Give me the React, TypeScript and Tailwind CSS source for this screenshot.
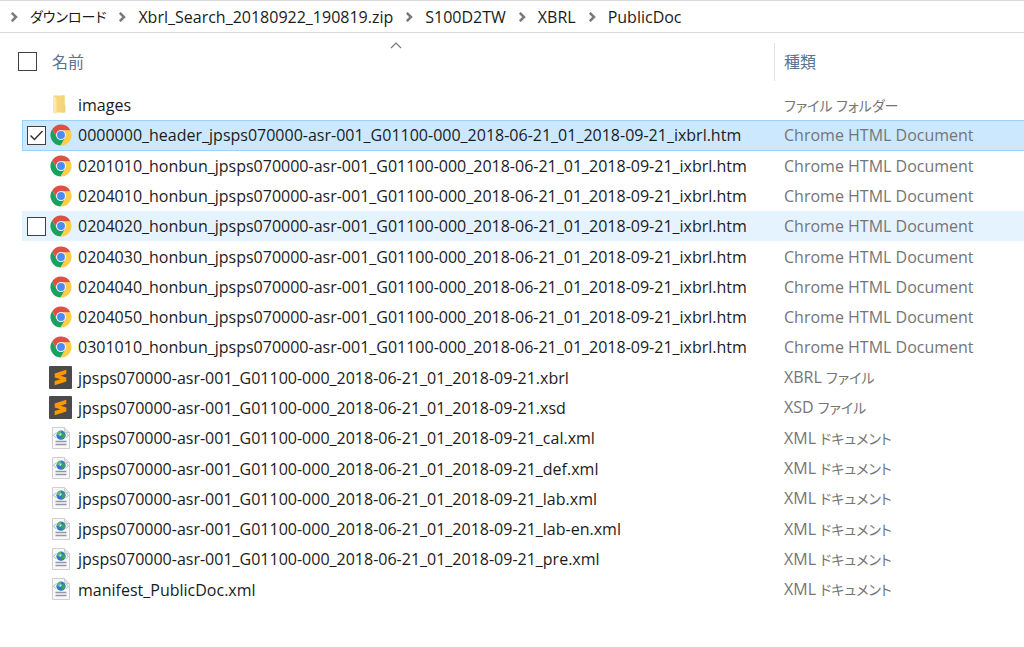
import { useState } from "react";
import clsx from "clsx";

type FileKind = "folder" | "chrome" | "sublime" | "xml";

interface FileEntry {
  name: string;
  kind: FileKind;
  type: string;
  typeJa?: string;
}

const CHROME_TYPE = "Chrome HTML Document";

const PATH = ["ダウンロード", "Xbrl_Search_20180922_190819.zip", "S100D2TW", "XBRL", "PublicDoc"];

const FILES: FileEntry[] = [
  { name: "images", kind: "folder", type: "", typeJa: "ファイル フォルダー" },
  { name: "0000000_header_jpsps070000-asr-001_G01100-000_2018-06-21_01_2018-09-21_ixbrl.htm", kind: "chrome", type: CHROME_TYPE },
  { name: "0201010_honbun_jpsps070000-asr-001_G01100-000_2018-06-21_01_2018-09-21_ixbrl.htm", kind: "chrome", type: CHROME_TYPE },
  { name: "0204010_honbun_jpsps070000-asr-001_G01100-000_2018-06-21_01_2018-09-21_ixbrl.htm", kind: "chrome", type: CHROME_TYPE },
  { name: "0204020_honbun_jpsps070000-asr-001_G01100-000_2018-06-21_01_2018-09-21_ixbrl.htm", kind: "chrome", type: CHROME_TYPE },
  { name: "0204030_honbun_jpsps070000-asr-001_G01100-000_2018-06-21_01_2018-09-21_ixbrl.htm", kind: "chrome", type: CHROME_TYPE },
  { name: "0204040_honbun_jpsps070000-asr-001_G01100-000_2018-06-21_01_2018-09-21_ixbrl.htm", kind: "chrome", type: CHROME_TYPE },
  { name: "0204050_honbun_jpsps070000-asr-001_G01100-000_2018-06-21_01_2018-09-21_ixbrl.htm", kind: "chrome", type: CHROME_TYPE },
  { name: "0301010_honbun_jpsps070000-asr-001_G01100-000_2018-06-21_01_2018-09-21_ixbrl.htm", kind: "chrome", type: CHROME_TYPE },
  { name: "jpsps070000-asr-001_G01100-000_2018-06-21_01_2018-09-21.xbrl", kind: "sublime", type: "XBRL ", typeJa: "ファイル" },
  { name: "jpsps070000-asr-001_G01100-000_2018-06-21_01_2018-09-21.xsd", kind: "sublime", type: "XSD ", typeJa: "ファイル" },
  { name: "jpsps070000-asr-001_G01100-000_2018-06-21_01_2018-09-21_cal.xml", kind: "xml", type: "XML ", typeJa: "ドキュメント" },
  { name: "jpsps070000-asr-001_G01100-000_2018-06-21_01_2018-09-21_def.xml", kind: "xml", type: "XML ", typeJa: "ドキュメント" },
  { name: "jpsps070000-asr-001_G01100-000_2018-06-21_01_2018-09-21_lab.xml", kind: "xml", type: "XML ", typeJa: "ドキュメント" },
  { name: "jpsps070000-asr-001_G01100-000_2018-06-21_01_2018-09-21_lab-en.xml", kind: "xml", type: "XML ", typeJa: "ドキュメント" },
  { name: "jpsps070000-asr-001_G01100-000_2018-06-21_01_2018-09-21_pre.xml", kind: "xml", type: "XML ", typeJa: "ドキュメント" },
  { name: "manifest_PublicDoc.xml", kind: "xml", type: "XML ", typeJa: "ドキュメント" },
];

function Chevron() {
  return (
    <svg width="8" height="10" viewBox="0 0 8 10" className="shrink-0" aria-hidden="true">
      <path d="M1.8 0.8 L6 5 L1.8 9.2" fill="none" stroke="#7a7a7a" strokeWidth="2.5" />
    </svg>
  );
}

function FolderIcon() {
  return (
    <svg width="22" height="22" viewBox="0 0 22 22" aria-hidden="true">
      <path d="M3 1.5 H14.5 V18.5 H3 Z" fill="#f5d67b" />
      <path d="M11.5 1.5 H14.5 V10.5 L15.5 11.5 V18.5 H11.5 Z" fill="#f2d47e" />
      <path d="M3 1.5 L6.5 4 V20.5 L3 18.5 Z" fill="#fbe8ae" />
    </svg>
  );
}

function ChromeIcon() {
  return (
    <svg width="22" height="22" viewBox="1 1 46 46" aria-hidden="true">
      <path d="M24 14 H43.6 A22 22 0 0 1 22.86 46 L32.66 29 A10 10 0 0 0 24 14 Z" fill="#ffcd46" />
      <path d="M5.54 12 A22 22 0 0 0 22.86 46 L32.66 29 A10 10 0 0 1 15.34 29 Z" fill="#1aa15f" />
      <path d="M24 14 H43.6 A22 22 0 0 0 5.54 12 L15.34 29 A10 10 0 0 1 24 14 Z" fill="#dd5144" />
      <circle cx="24" cy="24" r="10" fill="#f4f4f4" />
      <circle cx="24" cy="24" r="8.2" fill="#4c8bf5" />
    </svg>
  );
}

function SublimeIcon() {
  return (
    <svg width="23" height="23" viewBox="0 0 23 23" aria-hidden="true">
      <rect width="23" height="23" rx="1" fill="#4a4a4a" />
      <path
        d="M17.3 3.8 V7.8 L11.6 9.7 L17.3 11.4 V15.4 L5.7 19.2 V15.1 L11.5 13.2 L5.7 11.6 V7.4 Z"
        fill="#ff9800"
      />
    </svg>
  );
}

function XmlIcon() {
  return (
    <svg width="22" height="23" viewBox="0 0 22 23" aria-hidden="true">
      <path d="M2.5 0.5 H14.5 L19.5 5.5 V21.5 H2.5 Z" fill="#f8f8f9" stroke="#cfcfd1" />
      <path d="M14.5 0.5 V5.5 H19.5" fill="#e4e4e6" stroke="#cfcfd1" />
      <path d="M6.2 5.5 L3.5 8.2 L6.2 10.9 M15.8 5.5 L18.5 8.2 L15.8 10.9" fill="none" stroke="#a9b4bf" />
      <circle cx="11" cy="8.2" r="4.6" fill="#2c78c8" />
      <path d="M7.5 5.5 Q9.5 3.5 11.5 4.4 L10.5 6.5 L9 8.2 L7 8 Z" fill="#62bb6c" />
      <path d="M12.5 6 L15.2 7 V9.8 L12.8 12 L11.3 9.4 Z" fill="#3ea352" />
      <path d="M9.8 6.6 L12 6.4 L11 8.6 L9.4 9 Z" fill="#c5eef9" />
      <path d="M5.5 14.5 H16.5 M5.5 17.5 H16.5" stroke="#9496a8" strokeWidth="1.4" />
    </svg>
  );
}

function FileIcon({ kind }: { kind: FileKind }) {
  if (kind === "folder") return <FolderIcon />;
  if (kind === "chrome") return <ChromeIcon />;
  if (kind === "sublime") return <SublimeIcon />;
  return <XmlIcon />;
}

interface CheckboxProps {
  label: string;
  checked: boolean;
  onChange: () => void;
  className?: string;
}

function Checkbox({ label, checked, onChange, className }: CheckboxProps) {
  return (
    <span className={clsx("relative block size-[19px] shrink-0", className)}>
      <input
        type="checkbox"
        aria-label={label}
        checked={checked}
        onChange={onChange}
        className="block size-full appearance-none border border-[#404040] bg-white"
      />
      {checked && (
        <svg viewBox="0 0 19 19" className="pointer-events-none absolute inset-0 size-full" aria-hidden="true">
          <path d="M3.5 9.5 L7.5 13.5 L15.5 5" fill="none" stroke="#333" strokeWidth="1.5" />
        </svg>
      )}
    </span>
  );
}

export default function App() {
  const [selected, setSelected] = useState<number[]>([1]);
  const [hovered, setHovered] = useState(4);

  const toggle = (i: number) =>
    setSelected((prev) => (prev.includes(i) ? prev.filter((n) => n !== i) : [...prev, i]));
  const allSelected = selected.length === FILES.length;
  const toggleAll = () => setSelected(allSelected ? [] : FILES.map((_, i) => i));

  return (
    <div className="min-h-screen overflow-hidden bg-white font-['Open_Sans','Noto_Sans_CJK_JP',sans-serif] text-[16px] leading-6 text-[#1b1b1b]">
      {/* Address bar */}
      <nav aria-label="パス" className="border-y border-[#d9d9d9]">
        <ol className="flex h-[31px] items-center gap-3 pl-[10px] whitespace-nowrap">
          {PATH.map((part) => (
            <li key={part} className="flex items-center gap-3">
              <Chevron />
              <a href="#" className={clsx(part === "ダウンロード" && "text-[14px] [font-feature-settings:'palt']")}>
                {part}
              </a>
            </li>
          ))}
        </ol>
      </nav>

      {/* File list */}
      <table className="h-[572px] w-full table-fixed border-separate border-spacing-0 text-left">
        <colgroup>
          <col className="w-[22px]" />
          <col className="w-[752px]" />
          <col />
        </colgroup>
        <thead>
          <tr className="h-[57px] text-[#5a7391]">
            <th colSpan={2} scope="col" className="relative p-0 font-normal">
              <div className="flex items-center gap-[15px] pl-[18px]">
                <Checkbox label="すべて選択" checked={allSelected} onChange={toggleAll} />
                <button type="button">名前</button>
              </div>
              <svg
                width="12"
                height="7"
                viewBox="0 0 12 7"
                className="absolute top-[9px] left-[390px]"
                aria-hidden="true"
              >
                <path d="M1 6 L6 1 L11 6" fill="none" stroke="#777" strokeWidth="1.2" />
              </svg>
            </th>
            <th scope="col" className="p-0 font-normal">
              <div className="flex h-[38px] items-center border-l border-[#e2e2e2] pl-[9px]">
                <button type="button">種類</button>
              </div>
            </th>
          </tr>
        </thead>
        <tbody>
          {FILES.map((file, i) => {
            const isSelected = selected.includes(i);
            const isHovered = hovered === i;
            const cell = clsx(
              "p-0",
              isSelected && "border-y border-[#99d1ff] bg-[#cce8ff]",
              !isSelected && isHovered && "bg-[#e5f3ff]",
            );
            return (
              <tr key={file.name} className="h-[30px]" onMouseEnter={() => setHovered(i)}>
                <td className="p-0" />
                <td className={clsx(cell, isSelected && "border-l")}>
                  <div className={clsx("flex items-center whitespace-nowrap", isSelected ? "pl-1" : "pl-[5px]")}>
                    <Checkbox
                      label={file.name}
                      checked={isSelected}
                      onChange={() => toggle(i)}
                      className={clsx(!isSelected && !isHovered && "opacity-0")}
                    />
                    <span className="ml-[3px] flex w-[23px] shrink-0 justify-center">
                      <FileIcon kind={file.kind} />
                    </span>
                    <span className="ml-[6px]">{file.name}</span>
                  </div>
                </td>
                <td className={cell}>
                  <div className="pl-[10px] whitespace-nowrap text-[#757575]">
                    {file.type}
                    {file.typeJa && <span className="text-[14px] [font-feature-settings:'palt']">{file.typeJa}</span>}
                  </div>
                </td>
              </tr>
            );
          })}
        </tbody>
      </table>
    </div>
  );
}
